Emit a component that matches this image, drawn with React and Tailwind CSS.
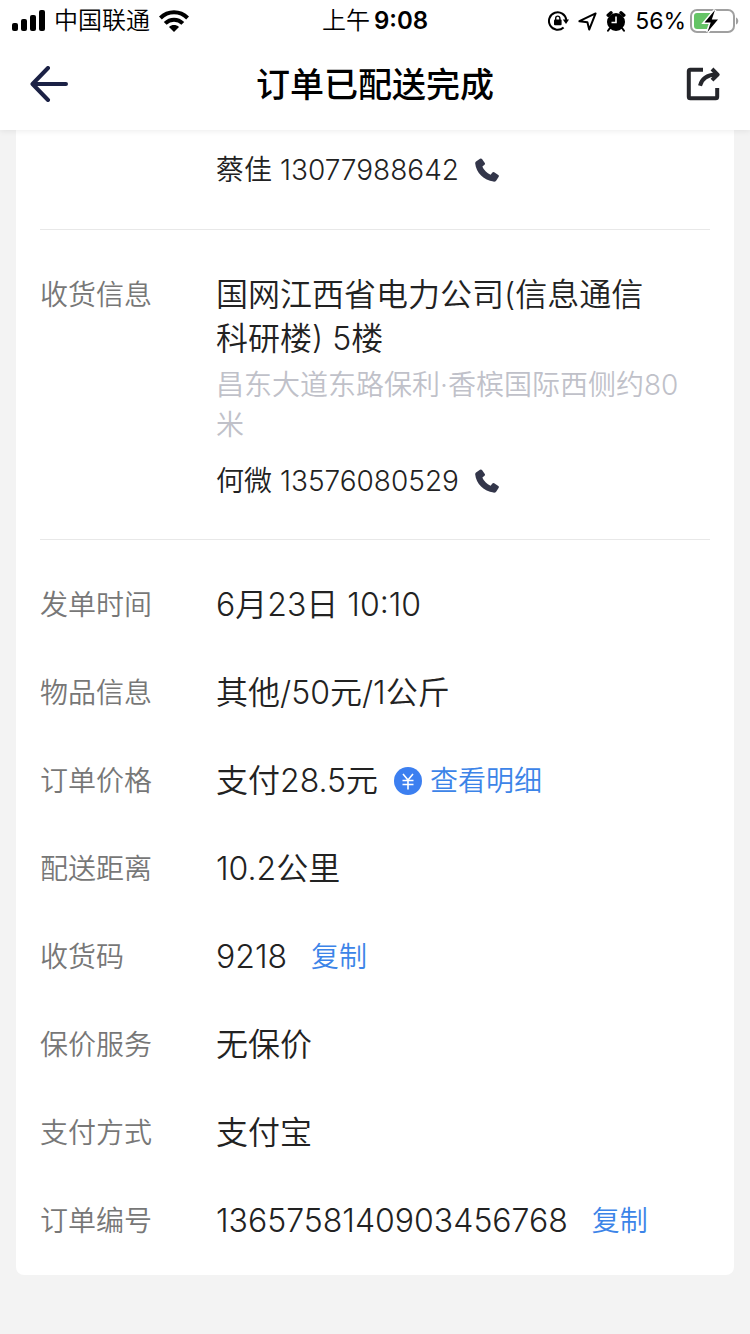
const detalles = [
  { label: '发单时间', value: '6月23日 10:10' },
  { label: '物品信息', value: '其他/50元/1公斤' },
  { label: '订单价格', value: '支付28.5元', detail: true },
  { label: '配送距离', value: '10.2公里' },
  { label: '收货码', value: '9218', copy: true },
  { label: '保价服务', value: '无保价' },
  { label: '支付方式', value: '支付宝' },
  { label: '订单编号', value: '1365758140903456768', copy: true }
]

// STATUS BAR ICONS

function Signal() {
  return (
    <svg width="34" height="22" viewBox="0 0 34 22" aria-hidden="true">
      <rect x="1" y="13" width="6" height="8" rx="2" />
      <rect x="10" y="9" width="6" height="12" rx="2" />
      <rect x="19" y="5" width="6" height="16" rx="2" />
      <rect x="28" y="0" width="6" height="21" rx="2" />
    </svg>
  )
}

function Wifi() {
  return (
    <svg width="30" height="22" viewBox="0 0 30 22" aria-hidden="true">
      <g fill="none" stroke="#000" strokeWidth="4">
        <path d="M1.400 8C9 .4 21 .4 28.600 8" />
        <path d="M6.200 13.400c5-5 12.600-5 17.600 0" />
      </g>
      <path d="M10 17c2.800-2.600 7.200-2.600 10 0L15 22z" />
    </svg>
  )
}

function RotationLock() {
  return (
    <svg width="21" height="20" viewBox="0 0 21 20" aria-hidden="true">
      <path d="M15.600 16.400A8.700 8.700 0 1 1 18.300 9" fill="none" stroke="#000" strokeWidth="2" />
      <path d="M14.800 8.600h6.200L18 13z" />
      <rect x="6" y="8.600" width="7.600" height="5.600" rx="1" />
      <path d="M7.700 9V7.200a2.100 2.100 0 0 1 4.200 0V9" fill="none" stroke="#000" strokeWidth="1.400" />
    </svg>
  )
}

function LocationArrow() {
  return (
    <svg width="19" height="19" viewBox="0 0 19 19" aria-hidden="true">
      <path d="M17.600 1.400 1.400 9.200l8 1 1.800 7.400z" fill="none" stroke="#000" strokeWidth="2" strokeLinejoin="round" />
    </svg>
  )
}

function Alarm() {
  return (
    <svg width="20" height="21" viewBox="0 0 20 21" aria-hidden="true">
      <circle cx="10" cy="11" r="9" />
      <path d="M2.200 4.200 5 1.800M17.800 4.200 15 1.800" stroke="#000" strokeWidth="3.400" strokeLinecap="round" />
      <path d="m3.600 17.500-1.600 2.300M16.400 17.500l1.600 2.300" stroke="#000" strokeWidth="2" strokeLinecap="round" />
      <path d="M10 5.500v6H5.500" fill="none" stroke="#fff" strokeWidth="1.600" />
    </svg>
  )
}

function Battery() {
  return (
    <svg width="49" height="26" viewBox="0 0 49 26" aria-hidden="true">
      <rect x="1" y="2" width="43" height="22" rx="6" fill="none" stroke="#a0a0a0" strokeWidth="2" />
      <path d="M7 5h15v16H7a3 3 0 0 1-3-3V8a3 3 0 0 1 3-3z" fill="#65c466" />
      <path d="M46 9.500c3 1 3 6 0 7z" fill="#a0a0a0" />
      <path d="M25 2 14.500 14.400h6.200L17.500 24 28 11.600h-6.200z" stroke="#fff" strokeWidth="3" paintOrder="stroke" />
    </svg>
  )
}

// HEADER ICONS

function BackArrow() {
  return (
    <svg width="38" height="36" viewBox="0 0 38 36" fill="none" stroke="#1b2145" strokeWidth="4" strokeLinecap="round" strokeLinejoin="round" aria-hidden="true">
      <path d="M18 2 2.500 18 18 34M3 18h33" />
    </svg>
  )
}

function Share() {
  return (
    <svg width="34" height="34" viewBox="0 0 34 34" fill="none" stroke="#25262b" strokeWidth="4" strokeLinejoin="round" aria-hidden="true">
      <path d="M17 2.800H4.300A1.500 1.500 0 0 0 2.800 4.300v25.400a1.500 1.500 0 0 0 1.500 1.500h25.400a1.500 1.500 0 0 0 1.500-1.500V21" />
      <path d="M14 18.800C15.600 12.400 21 8 30 7.600" />
      <path d="m26 2 5.600 5.600L26 13.200" />
    </svg>
  )
}

// CONTENT ICONS

function Handset() {
  return (
    <svg width="24" height="24" viewBox="0 0 24 24" fill="#33364a" aria-hidden="true">
      <path d="M1 3.500 5 .700Q6.200 0 7 1l2.800 4q.600 1-.300 1.800L7.400 8.500c1.200 3.200 4.600 6.700 8.200 8.200l1.800-2.300q.800-.800 1.800-.200l4.100 2.800q1 .800.400 1.800l-2.400 3.600q-1 1.400-2.800 1.200C9 22.500 1 14.500.200 5.500Q.100 4.200 1 3.500z" />
    </svg>
  )
}

function YuanBadge() {
  return (
    <svg width="28" height="28" viewBox="0 0 28 28" aria-hidden="true">
      <circle cx="14" cy="14" r="14" fill="#3c7ff0" />
      <path d="m9 7 5 6 5-6M14 13v9.500M8.500 13.500h11M8.500 17.500h11" fill="none" stroke="#fff" strokeWidth="1.600" />
    </svg>
  )
}

function Contact({ name, phone }) {
  return (
    <div className="flex items-center text-[28px] leading-10 text-[#222]">
      <span>{name} {phone}</span>
      <a href={`tel:${phone}`} aria-label={`拨打 ${phone}`} className="ml-4">
        <Handset />
      </a>
    </div>
  )
}

function App() {

  return (

    <div className="min-h-screen bg-[#f3f3f3] pb-15 font-['Inter','Noto_Sans_CJK_SC',sans-serif] font-[350]">

      <header className="sticky top-0 z-10 bg-white shadow-[0_1px_6px_rgba(0,0,0,0.08)]">

        {/* STATUS BAR */}

        <div className="grid h-[42px] grid-cols-[1fr_auto_1fr] items-center px-[11px] text-2xl font-[350] text-black">

          <div className="flex items-center gap-[9px]">
            <Signal />
            <span>中国联通</span>
            <Wifi />
          </div>

          <div className="flex items-center gap-1">
            上午<span className="font-semibold">9:08</span>
          </div>

          <div className="flex items-center justify-end gap-[9px]">
            <RotationLock />
            <LocationArrow />
            <Alarm />
            <span className="flex items-center gap-1 text-[23px] font-normal">56%<Battery /></span>
          </div>

        </div>

        {/* TITLE */}

        <div className="flex h-[88px] items-center justify-between px-[30px] pb-1">

          <button type="button" aria-label="返回" className="flex w-10 justify-start">
            <BackArrow />
          </button>

          <h1 className="text-[34px] font-medium text-black">订单已配送完成</h1>

          <button type="button" aria-label="分享" className="flex w-10 justify-end">
            <Share />
          </button>

        </div>

      </header>

      <main className="mx-4 rounded-b-lg bg-white px-6 pb-8 text-[#222]">

        {/* SENDER */}

        <section className="border-b border-[#e8e8e8] pt-5 pb-[39px] pl-44">
          <Contact name="蔡佳" phone="13077988642" />
        </section>

        {/* RECEIVER */}

        <section className="flex border-b border-[#e8e8e8] pt-[43px] pb-[38px]">

          <h2 className="w-44 shrink-0 text-[28px] leading-11 text-[#777]">收货信息</h2>

          <div className="min-w-0 flex-1">

            <p className="pr-12 text-[32px] leading-11">
              国网江西省电力公司(信息通信科研楼) 5楼
            </p>

            <p className="mt-1 mb-4 pr-6 text-[28px] leading-10 text-[#c0c1c9]">
              昌东大道东路保利·香槟国际西侧约80米
            </p>

            <Contact name="何微" phone="13576080529" />

          </div>

        </section>

        {/* ORDER DETAILS */}

        <dl className="flex flex-col gap-11 pt-[43px]">

          {detalles.map((item) => (

            <div key={item.label} className="flex items-center leading-11">

              <dt className="w-44 shrink-0 text-[28px] text-[#777]">{item.label}</dt>

              <dd className="flex items-center text-[32px]">

                {item.value}

                {item.detail && (
                  <button type="button" className="ml-4 flex items-center gap-2 text-[28px] text-[#3c84e8]">
                    <YuanBadge />
                    查看明细
                  </button>
                )}

                {item.copy && (
                  <button type="button" className="ml-6 text-[28px] text-[#3c84e8]">
                    复制
                  </button>
                )}

              </dd>

            </div>

          ))}

        </dl>

      </main>

    </div>
  )
}

export default App
